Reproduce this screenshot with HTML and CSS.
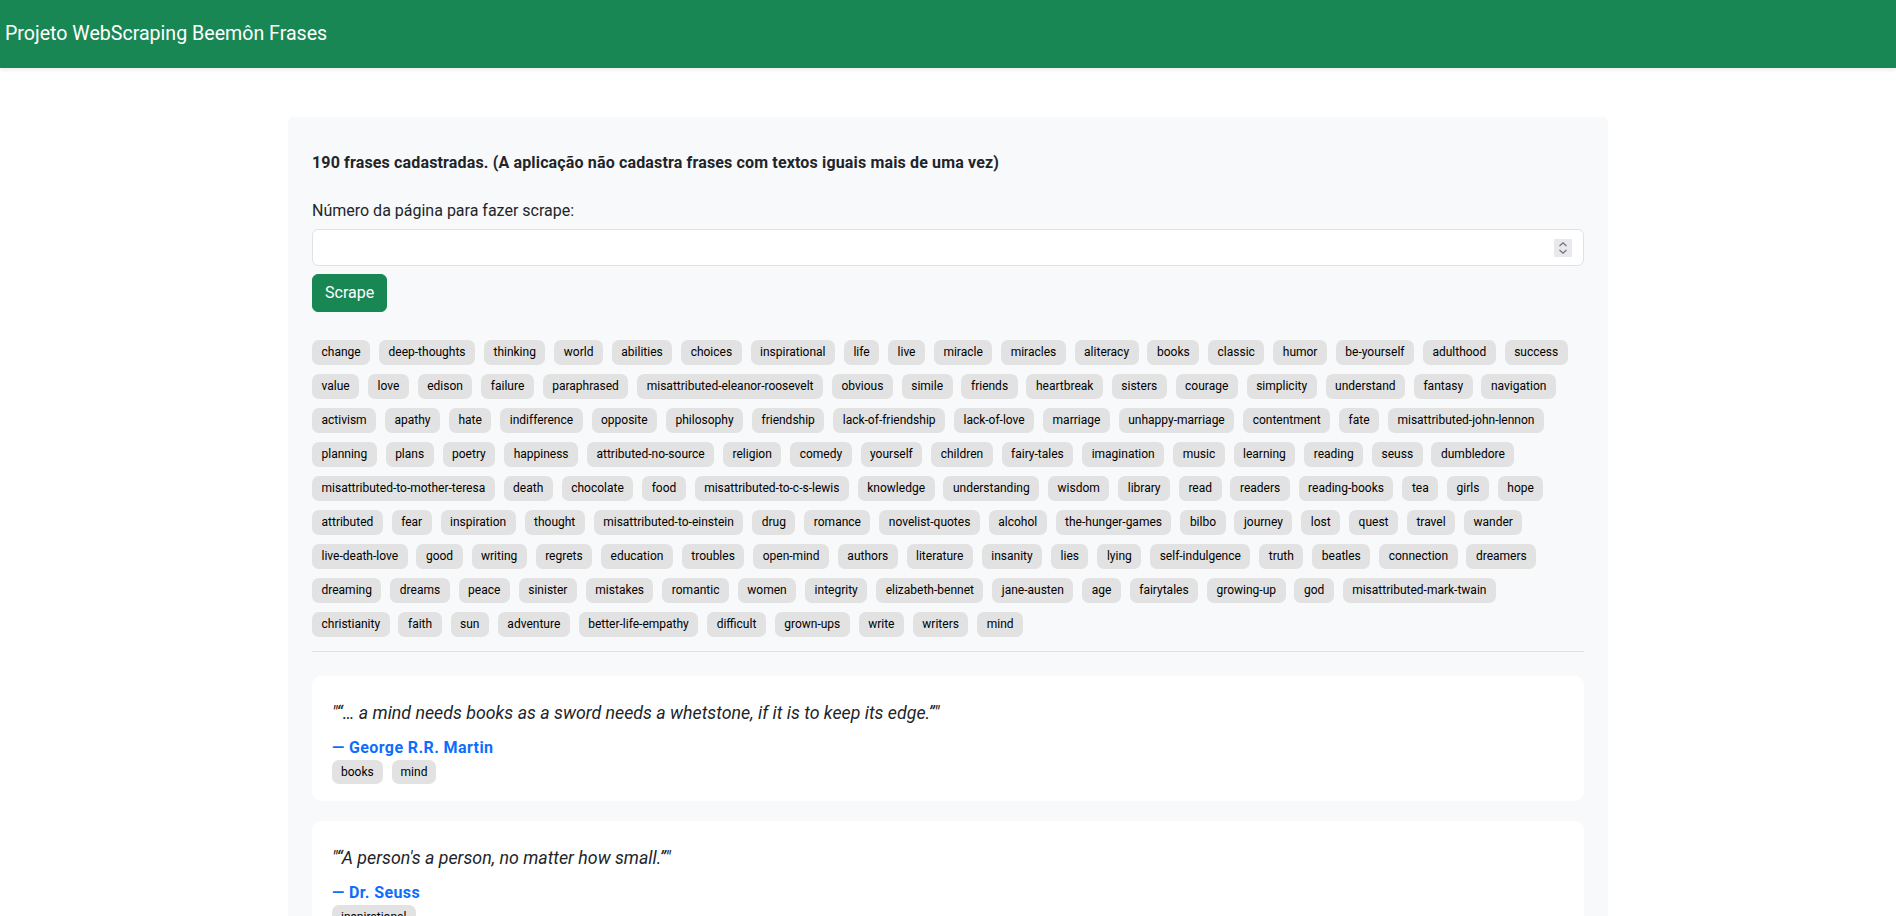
FILE: index.html
```html
<!DOCTYPE html>
<html lang="pt-BR">
<head>
<meta charset="utf-8">
<title>Projeto WebScraping Beemôn Frases</title>
<link rel="stylesheet" href="styles.css">
</head>
<body>
<nav class="navbar">
  <span class="brand">Projeto WebScraping Beemôn Frases</span>
</nav>

<main class="container">
  <h6 class="count">190 frases cadastradas. (A aplicação não cadastra frases com textos iguais mais de uma vez)</h6>

  <form class="scrape-form">
    <label class="form-label" for="page">Número da página para fazer scrape:</label>
    <div class="input-wrap">
      <input class="form-control" id="page" type="text">
      <span class="spin">
        <svg width="10" height="14" viewBox="0 0 10 14"><path d="M1.5 5 L5 1.8 L8.5 5" fill="none" stroke="#6f6f78" stroke-width="1.2"/><path d="M1.5 9 L5 12.2 L8.5 9" fill="none" stroke="#6f6f78" stroke-width="1.2"/></svg>
      </span>
    </div>
    <button class="btn" type="button">Scrape</button>
  </form>

  <div class="tags all-tags">
    <div class="tag-row"><span class="tag">change</span><span class="tag">deep-thoughts</span><span class="tag">thinking</span><span class="tag">world</span><span class="tag">abilities</span><span class="tag">choices</span><span class="tag">inspirational</span><span class="tag">life</span><span class="tag">live</span><span class="tag">miracle</span><span class="tag">miracles</span><span class="tag">aliteracy</span><span class="tag">books</span><span class="tag">classic</span><span class="tag">humor</span><span class="tag">be-yourself</span><span class="tag">adulthood</span><span class="tag">success</span></div>
    <div class="tag-row"><span class="tag">value</span><span class="tag">love</span><span class="tag">edison</span><span class="tag">failure</span><span class="tag">paraphrased</span><span class="tag">misattributed-eleanor-roosevelt</span><span class="tag">obvious</span><span class="tag">simile</span><span class="tag">friends</span><span class="tag">heartbreak</span><span class="tag">sisters</span><span class="tag">courage</span><span class="tag">simplicity</span><span class="tag">understand</span><span class="tag">fantasy</span><span class="tag">navigation</span></div>
    <div class="tag-row"><span class="tag">activism</span><span class="tag">apathy</span><span class="tag">hate</span><span class="tag">indifference</span><span class="tag">opposite</span><span class="tag">philosophy</span><span class="tag">friendship</span><span class="tag">lack-of-friendship</span><span class="tag">lack-of-love</span><span class="tag">marriage</span><span class="tag">unhappy-marriage</span><span class="tag">contentment</span><span class="tag">fate</span><span class="tag">misattributed-john-lennon</span></div>
    <div class="tag-row"><span class="tag">planning</span><span class="tag">plans</span><span class="tag">poetry</span><span class="tag">happiness</span><span class="tag">attributed-no-source</span><span class="tag">religion</span><span class="tag">comedy</span><span class="tag">yourself</span><span class="tag">children</span><span class="tag">fairy-tales</span><span class="tag">imagination</span><span class="tag">music</span><span class="tag">learning</span><span class="tag">reading</span><span class="tag">seuss</span><span class="tag">dumbledore</span></div>
    <div class="tag-row"><span class="tag">misattributed-to-mother-teresa</span><span class="tag">death</span><span class="tag">chocolate</span><span class="tag">food</span><span class="tag">misattributed-to-c-s-lewis</span><span class="tag">knowledge</span><span class="tag">understanding</span><span class="tag">wisdom</span><span class="tag">library</span><span class="tag">read</span><span class="tag">readers</span><span class="tag">reading-books</span><span class="tag">tea</span><span class="tag">girls</span><span class="tag">hope</span></div>
    <div class="tag-row"><span class="tag">attributed</span><span class="tag">fear</span><span class="tag">inspiration</span><span class="tag">thought</span><span class="tag">misattributed-to-einstein</span><span class="tag">drug</span><span class="tag">romance</span><span class="tag">novelist-quotes</span><span class="tag">alcohol</span><span class="tag">the-hunger-games</span><span class="tag">bilbo</span><span class="tag">journey</span><span class="tag">lost</span><span class="tag">quest</span><span class="tag">travel</span><span class="tag">wander</span></div>
    <div class="tag-row"><span class="tag">live-death-love</span><span class="tag">good</span><span class="tag">writing</span><span class="tag">regrets</span><span class="tag">education</span><span class="tag">troubles</span><span class="tag">open-mind</span><span class="tag">authors</span><span class="tag">literature</span><span class="tag">insanity</span><span class="tag">lies</span><span class="tag">lying</span><span class="tag">self-indulgence</span><span class="tag">truth</span><span class="tag">beatles</span><span class="tag">connection</span><span class="tag">dreamers</span></div>
    <div class="tag-row"><span class="tag">dreaming</span><span class="tag">dreams</span><span class="tag">peace</span><span class="tag">sinister</span><span class="tag">mistakes</span><span class="tag">romantic</span><span class="tag">women</span><span class="tag">integrity</span><span class="tag">elizabeth-bennet</span><span class="tag">jane-austen</span><span class="tag">age</span><span class="tag">fairytales</span><span class="tag">growing-up</span><span class="tag">god</span><span class="tag">misattributed-mark-twain</span></div>
    <div class="tag-row"><span class="tag">christianity</span><span class="tag">faith</span><span class="tag">sun</span><span class="tag">adventure</span><span class="tag">better-life-empathy</span><span class="tag">difficult</span><span class="tag">grown-ups</span><span class="tag">write</span><span class="tag">writers</span><span class="tag">mind</span></div>
  </div>

  <hr class="divider">

  <div class="quotes">
    <div class="quote-card">
      <p class="quote-text">"“… a mind needs books as a sword needs a whetstone, if it is to keep its edge.”"</p>
      <p class="quote-author">— George R.R. Martin</p>
      <div class="tag-row"><span class="tag">books</span><span class="tag">mind</span></div>
    </div>
    <div class="quote-card">
      <p class="quote-text">"“A person's a person, no matter how small.”"</p>
      <p class="quote-author">— Dr. Seuss</p>
      <div class="tag-row"><span class="tag">inspirational</span></div>
    </div>
    <div class="quote-card">
      <p class="quote-text">"“The more that you read, the more things you will know. The more that you learn, the more places you'll go.”"</p>
      <p class="quote-author">— Dr. Seuss</p>
      <div class="tag-row"><span class="tag">learning</span><span class="tag">reading</span><span class="tag">seuss</span></div>
    </div>
  </div>
</main>
</body>
</html>
```
FILE: styles.css
```css
* { box-sizing: border-box; }

html, body {
  margin: 0;
  padding: 0;
}

body {
  font-family: Roboto, "Liberation Sans", sans-serif;
  font-size: 16px;
  line-height: 1.5;
  color: #212529;
  background: #ffffff;
}

.navbar {
  height: 68px;
  background: #198754;
  display: flex;
  align-items: center;
  padding: 0 5px;
  box-shadow: 0 2px 4px rgba(0, 0, 0, 0.08);
}

.brand {
  color: #ffffff;
  font-size: 19.6px;
  line-height: 30px;
}

.container {
  width: 1320px;
  margin: 49px auto 0;
  padding: 34px 24px 24px;
  background: #f8f9fa;
  border-radius: 6px;
}

.count {
  margin: 0 0 24px;
  font-size: 16px;
  font-weight: 700;
  line-height: 24px;
  letter-spacing: 0.15px;
}

.scrape-form {
  display: flex;
  flex-direction: column;
  align-items: flex-start;
}

.form-label {
  display: block;
  margin-bottom: 6px;
  line-height: 24px;
}

.input-wrap {
  position: relative;
  width: 100%;
}

.form-control {
  display: block;
  width: 100%;
  height: 37px;
  padding: 6px 12px;
  font: inherit;
  color: #212529;
  background: #ffffff;
  border: 1px solid #dee2e6;
  border-radius: 6px;
  outline: none;
}

.spin {
  position: absolute;
  right: 12px;
  top: 10px;
  width: 18px;
  height: 18px;
  background: #e9e9ed;
  display: flex;
  align-items: center;
  justify-content: center;
}

.btn {
  margin-top: 8px;
  height: 38px;
  padding: 6px 12px;
  font: inherit;
  color: #ffffff;
  background: #198754;
  border: 1px solid #198754;
  border-radius: 6px;
}

.all-tags {
  margin-top: 28px;
  display: flex;
  flex-direction: column;
  gap: 9px;
}

.tag-row {
  display: flex;
  flex-wrap: wrap;
  column-gap: 8.9px;
  row-gap: 9px;
}

.all-tags .tag-row {
  flex-wrap: nowrap;
}

.tag {
  display: inline-block;
  flex: none;
  padding: 4px 9.5px;
  font-size: 12px;
  line-height: 17px;
  color: #000000;
  background: #e2e2e2;
  border-radius: 7px;
  white-space: nowrap;
}

.divider {
  margin: 14px 0 24px;
  border: 0;
  border-top: 1px solid #dee2e6;
}

.quotes {
  display: flex;
  flex-direction: column;
  gap: 20px;
}

.quote-card {
  background: #ffffff;
  border-radius: 9px;
  padding: 23px 20px 17px;
}

.quote-text {
  margin: 0 0 10px;
  font-size: 17.8px;
  font-style: italic;
  line-height: 27px;
}

.quote-author {
  margin: 0;
  font-weight: 700;
  color: #0d6efd;
  line-height: 24px;
  letter-spacing: 0.4px;
}

.quote-card .tag {
  line-height: 16px;
  padding: 4px 9px;
}
```
